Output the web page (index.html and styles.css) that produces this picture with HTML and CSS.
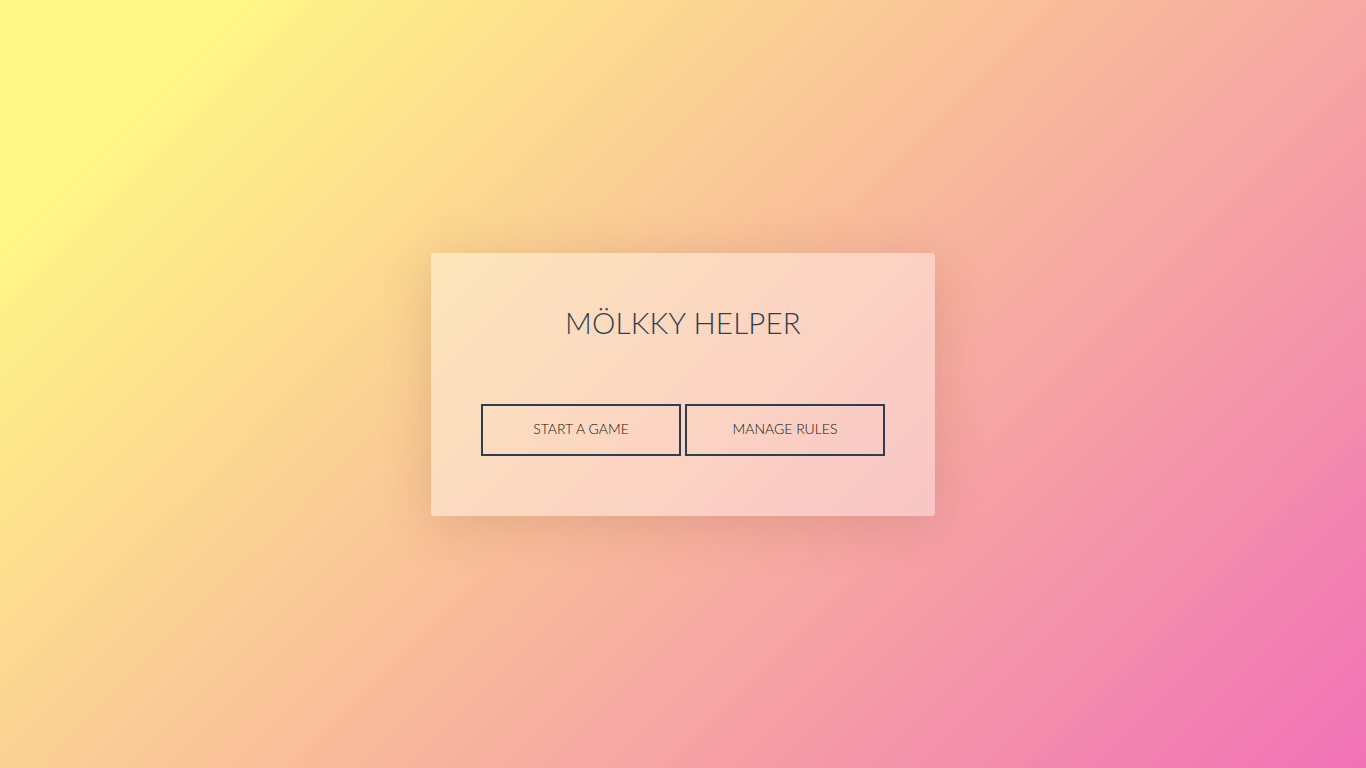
FILE: index.html
```html
<!DOCTYPE html>
<html lang="en">
<head>
<meta charset="utf-8">
<title>Mölkky Helper</title>
<link rel="stylesheet" href="styles.css">
</head>
<body>
<main class="page">
  <section class="card">
    <h1 class="title">MÖLKKY HELPER</h1>
    <div class="actions">
      <button class="btn">START A GAME</button>
      <button class="btn">MANAGE RULES</button>
    </div>
  </section>
</main>
</body>
</html>
```
FILE: styles.css
```css
html, body {
  margin: 0;
  padding: 0;
  height: 100%;
}
body {
  font-family: Lato, "Open Sans", sans-serif;
  background: linear-gradient(135deg, #fff886 10%, #f072b6 100%);
  color: #2c3e50;
}
.page {
  height: 100vh;
  display: flex;
  align-items: center;
  justify-content: center;
}
.card {
  width: 404px;
  padding: 50px 50px 60px;
  background: rgba(255, 255, 255, 0.38);
  border-radius: 3px;
  box-shadow: 0 8px 50px rgba(120, 60, 20, 0.18);
  display: flex;
  flex-direction: column;
  align-items: center;
}
.title {
  margin: 0;
  font-weight: 300;
  font-size: 29.5px;
  line-height: 40px;
  letter-spacing: 0.2px;
  color: #2c3e50;
}
.actions {
  margin-top: 61px;
  display: flex;
  gap: 4px;
}
.btn {
  width: 200px;
  height: 52px;
  background: transparent;
  border: 2px solid #2c3e50;
  font-family: Lato, "Open Sans", sans-serif;
  font-size: 14px;
  font-weight: 300;
  color: #111;
  padding: 0;
  padding-bottom: 2px;
}
```
